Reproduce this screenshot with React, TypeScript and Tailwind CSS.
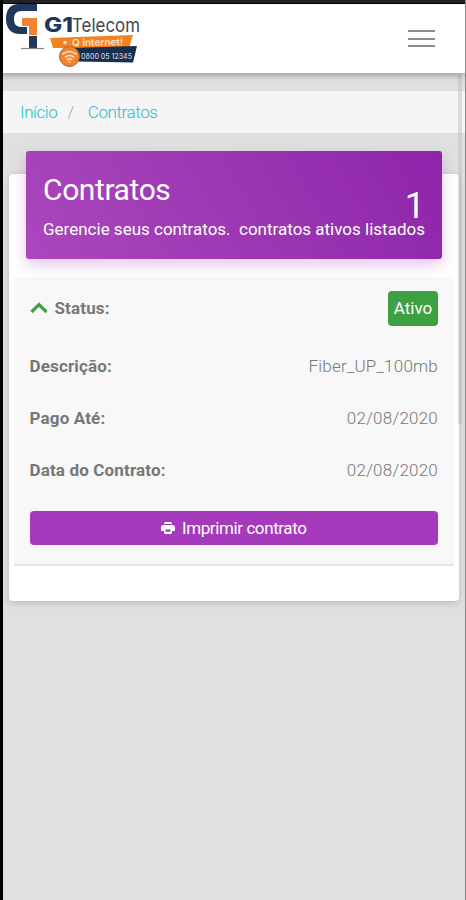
import React from 'react';

interface DetailRowProps {
  label: string;
  value: string;
}

const details: DetailRowProps[] = [
  { label: 'Descrição:', value: 'Fiber_UP_100mb' },
  { label: 'Pago Até:', value: '02/08/2020' },
  { label: 'Data do Contrato:', value: '02/08/2020' },
];

const Logo: React.FC = () => (
  <svg width="160" height="69" viewBox="0 0 160 69" className="block overflow-visible font-[Inter,'Liberation_Sans',sans-serif]" role="img" aria-label="G1 Telecom">
    {/* monogram */}
    <path d="M37 0H19C10 0 6 6 6 15s5 15 14 15h7v-7h-5c-6 0-8-3-8-8s2-8 8-8h15z" fill="#22375c" />
    <path d="M22 14h15v17h-8v-9h-7z" fill="#f58232" />
    <path d="M29 32h8v12h-8z" fill="#22375c" />
    <path d="M21 44.500h23" stroke="#7c8796" strokeWidth="1.200" />
    <text x="44" y="27.500" fontSize="20" fontWeight="800" fill="#22375c" textLength="29" lengthAdjust="spacingAndGlyphs">G1</text>
    <text x="72" y="27.500" fontSize="19" fontWeight="400" fill="#44484e" textLength="68" lengthAdjust="spacingAndGlyphs">Telecom</text>
    <path d="M50 34l83-3-4 13H53z" fill="#f58220" />
    <circle cx="65" cy="38.500" r="1.800" fill="#ffe3c7" />
    <text x="72" y="42" fontSize="9.500" fontWeight="500" fill="#fff1e2" textLength="51" lengthAdjust="spacingAndGlyphs" transform="rotate(-1 72 42)">Q internet!</text>
    <path d="M70 44l67-2-4 16.500-56-1z" fill="#172e4e" />
    <text x="81" y="54.500" fontSize="8" fontWeight="500" fill="#c4cedb" textLength="51" lengthAdjust="spacingAndGlyphs">0800 05 12345</text>
    <circle cx="69.500" cy="52.500" r="10" fill="#f28330" stroke="#9b6543" strokeWidth="1" />
    <g fill="none" stroke="#ffe0c5" strokeWidth="1.600" strokeLinecap="round">
      <path d="M63 50q6.500-5 13 0M65.500 53q4-3 8 0M67.500 55.500q2-1.500 4 0" />
    </g>
    <circle cx="69.500" cy="58" r="1" fill="#ffe0c5" />
  </svg>
);

const DetailRow: React.FC<DetailRowProps> = ({ label, value }) => (
  <div className="flex h-[52px] items-center justify-between">
    <span className="font-bold tracking-[0.15px] text-[#777777]">{label}</span>
    <span className="font-light tracking-[0.22px] text-[#777777]">{value}</span>
  </div>
);

const App: React.FC = () => {
  return (
    <div className="flex h-[900px] w-[466px] flex-col overflow-hidden border-r border-l-[3px] border-r-[#888888] border-l-black bg-[#e0e0e0] font-[Roboto,'Liberation_Sans',sans-serif] text-[17px] leading-[20px]">
      <div className="-ml-[3px] h-1 shrink-0 border-b border-black bg-[#242426]" />

      <header className="relative z-10 -ml-[3px] flex h-[69px] shrink-0 justify-between border-l-[3px] border-l-black bg-white shadow-[0_2px_7px_rgba(0,0,0,0.35)]">
        <div className="-ml-[3px]">
          <Logo />
        </div>
        <button type="button" aria-label="Menu" className="mt-[26px] mr-[30px] flex h-[17px] w-[27px] flex-col justify-between">
          <span className="h-[2px] w-full bg-[#8c8c8c]" />
          <span className="h-[2px] w-full bg-[#8c8c8c]" />
          <span className="h-[2px] w-full bg-[#8c8c8c]" />
        </button>
      </header>

      <nav className="mt-[18px] flex h-[42px] shrink-0 items-center bg-[#f5f5f5] pl-[17px] font-light tracking-[-0.4px] text-[#22bcd3]">
        <a href="#">Início</a>
        <span className="mr-[14px] ml-[10px] text-[#a5a5a5]">/</span>
        <a href="#">Contratos</a>
      </nav>

      <main className="mt-[41px] mr-[6px] ml-[6px] h-[427px] shrink-0 rounded-[4px] bg-white px-[5px] shadow-[0_2px_7px_rgba(0,0,0,0.17)]">
        <section className="relative -mt-[23px] mr-[12px] ml-3 flex h-[108px] justify-between rounded-[3px] bg-linear-60 from-[#ab47bc] to-[#8e24aa] px-[17px] text-white shadow-[0_6px_14px_rgba(142,36,170,0.25)]">
          <div>
            <h1 className="mt-[22px] text-[30px] leading-[34px] tracking-[-0.4px]">Contratos</h1>
            <p className="mt-[12px] whitespace-pre">Gerencie seus contratos.  contratos ativos listados</p>
          </div>
          <span className="absolute top-[35px] right-[17px] text-[36px] leading-[40px]">1</span>
        </section>

        <section className="mt-[18px] h-[289px] border-b-2 border-[#e3e3e3] bg-[#f8f8f8] pt-[14px] pr-[16px] pl-[15.5px]">
          <div className="flex h-[35px] items-center justify-between">
            <div className="flex items-center">
              <svg width="19" height="13" viewBox="0 0 19 13" className="-mt-[2px] mr-[6px]">
                <path d="M1.500 11L9 3.500l7.500 7.500" fill="none" stroke="#43a047" strokeWidth="3.200" />
              </svg>
              <span className="-mt-[2px] font-bold tracking-[0.15px] text-[#777777]">Status:</span>
            </div>
            <span className="flex h-[35px] w-[50px] items-center justify-center rounded-[4px] bg-[#3da143] pb-[2px] text-white">Ativo</span>
          </div>
          <div className="mt-[14px]">
            {details.map((row) => (
              <DetailRow key={row.label} label={row.label} value={row.value} />
            ))}
          </div>
          <button type="button" className="mt-[15px] flex h-[34px] w-full items-center justify-center rounded-[4px] bg-[#a63abc] text-white">
            <svg width="14" height="14" viewBox="0 0 14 14" className="mr-[7px]">
              <path d="M3 3V2.500Q3 1 4.500 1h5Q11 1 11 2.500V3zM2.500 4h9Q14 4 14 6.500V10h-3v1.500Q11 13 9.500 13h-5Q3 13 3 11.500V10H0V6.500Q0 4 2.500 4z" fill="#fff" />
              <path d="M4.500 8.500h5v1.200q0 1-1 1h-3q-1 0-1-1z" fill="#a63abc" />
            </svg>
            <span className="tracking-[-0.4px]">Imprimir contrato</span>
          </button>
        </section>
      </main>

      {/* scrollbar thumb over the page edge */}
      <div className="absolute top-[75px] left-[458px] h-[349px] w-1 bg-[#b0b0b0]/35" />
    </div>
  );
};

export default App;
